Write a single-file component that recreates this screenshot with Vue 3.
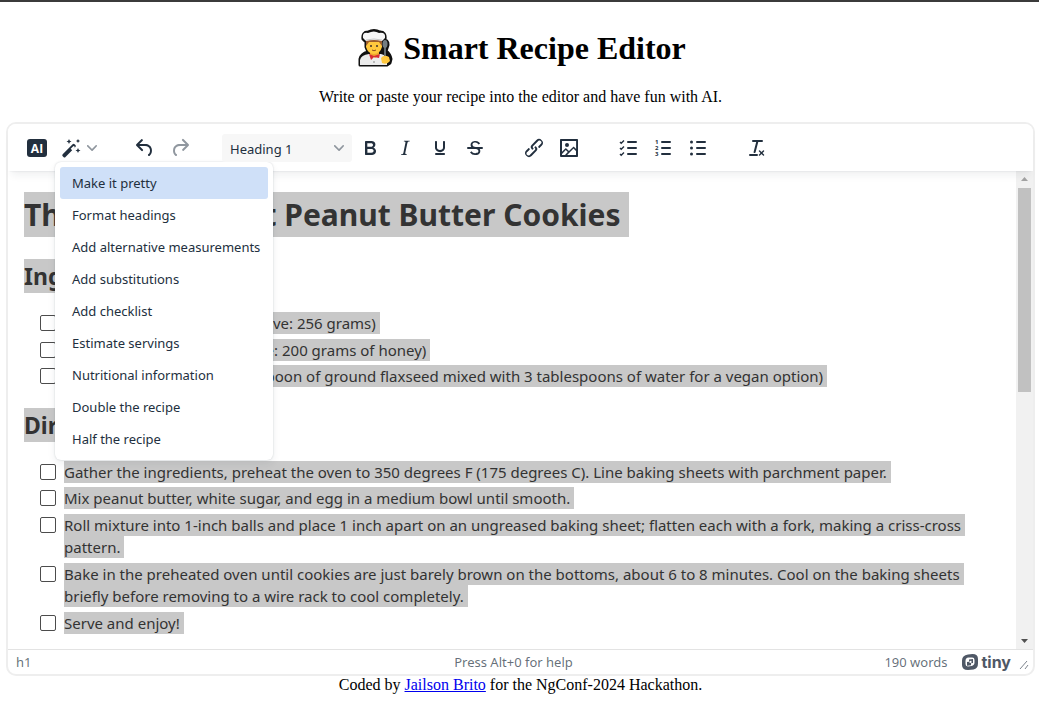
<script setup>
import { ref } from 'vue'

const actions = [
  'Make it pretty',
  'Format headings',
  'Add alternative measurements',
  'Add substitutions',
  'Add checklist',
  'Estimate servings',
  'Nutritional information',
  'Double the recipe',
  'Half the recipe'
]

const sections = [
  {
    title: 'Ingredients',
    items: [
      '1 cup peanut butter (Alternative: 256 grams)',
      '1 cup white sugar (Alternative: 200 grams of honey)',
      '1 egg (Alternative one tablespoon of ground flaxseed mixed with 3 tablespoons of water for a vegan option)'
    ]
  },
  {
    title: 'Directions',
    items: [
      'Gather the ingredients, preheat the oven to 350 degrees F (175 degrees C). Line baking sheets with parchment paper.',
      'Mix peanut butter, white sugar, and egg in a medium bowl until smooth.',
      'Roll mixture into 1-inch balls and place 1 inch apart on an ungreased baking sheet; flatten each with a fork, making a criss-cross pattern.',
      'Bake in the preheated oven until cookies are just barely brown on the bottoms, about 6 to 8 minutes. Cool on the baking sheets briefly before removing to a wire rack to cool completely.',
      'Serve and enjoy!'
    ]
  }
]

const formats = [
  { label: 'Bold', d: 'M7.8 19c-.3 0-.5 0-.6-.2l-.2-.5V5.7c0-.2 0-.4.2-.5l.6-.2h5c1.5 0 2.7.3 3.5 1 .7.6 1.1 1.4 1.1 2.5a3 3 0 0 1-.6 1.9c-.4.6-1 1-1.6 1.2.4.1.9.3 1.3.6s.8.7 1 1.2c.4.4.5 1 .5 1.6 0 1.3-.4 2.3-1.3 3-.8.7-2.1 1-3.8 1H7.8Zm5-8.3c.6 0 1.2-.1 1.6-.5.4-.3.6-.7.6-1.3 0-1.1-.8-1.7-2.3-1.7H9.3v3.5h3.4Zm.5 6c.7 0 1.3-.1 1.7-.4.4-.4.6-.9.6-1.5s-.2-1-.7-1.4c-.4-.3-1-.4-2-.4H9.4v3.8h4Z' },
  { label: 'Italic', d: 'm16.7 4.7-.1.9h-.3c-.6 0-1 0-1.4.3-.3.3-.4.6-.5 1.1l-2.1 9.8v.6c0 .5.4.8 1.4.8h.2l-.2.8H8l.2-.8h.2c1.1 0 1.8-.5 2-1.5l2-9.8.1-.5c0-.6-.4-.8-1.4-.8h-.3l.2-.9h5.8Z' },
  { label: 'Underline', d: 'M16 5c.6 0 1 .4 1 1v5.5a4 4 0 0 1-.4 1.8l-1 1.4a5.3 5.3 0 0 1-5.5 1 5 5 0 0 1-1.6-1c-.5-.4-.8-.9-1.1-1.4a4 4 0 0 1-.4-1.8V6c0-.6.4-1 1-1s1 .4 1 1v5.5c0 .3 0 .6.2 1l.6.7a3.3 3.3 0 0 0 2.2.8 3.4 3.4 0 0 0 2.2-.8c.3-.2.4-.5.6-.8l.2-.9V6c0-.6.4-1 1-1ZM8 17h8c.6 0 1 .4 1 1s-.4 1-1 1H8a1 1 0 0 1 0-2Z' },
  { label: 'Strikethrough', d: 'M15.6 8.5c-.5-.7-1-1.1-1.3-1.3-.6-.4-1.3-.6-2-.6-2.7 0-2.8 1.7-2.8 2.1 0 1.6 1.8 2 3.2 2.3 4.4.9 4.6 2.8 4.6 3.9 0 1.4-.7 4.1-5 4.1A6.2 6.2 0 0 1 7 16.4l1.5-1.1c.4.6 1.6 2 3.7 2 1.6 0 2.5-.4 3-1.2.4-.8.3-2-.8-2.6-.7-.4-1.6-.7-2.9-1-1-.2-3.9-.8-3.9-3.6C7.6 6 10.3 5 12.4 5c2.9 0 4.2 1.6 4.7 2.4l-1.5 1.1ZM5 11h14a1 1 0 0 1 0 2H5a1 1 0 0 1 0-2Z' }
]

const inserts = [
  { label: 'Link', d: 'M6.2 12.3a1 1 0 0 1 1.4 1.4l-2 2a2 2 0 1 0 2.6 2.8l4.8-4.8a1 1 0 0 0 0-1.4 1 1 0 1 1 1.4-1.3 2.9 2.9 0 0 1 0 4L9.6 20a3.9 3.9 0 0 1-5.5-5.5l2-2Zm11.6-.6a1 1 0 0 1-1.4-1.4l2-2a2 2 0 1 0-2.6-2.8L11 10.3a1 1 0 0 0 0 1.4A1 1 0 1 1 9.6 13a2.9 2.9 0 0 1 0-4L14.4 4a3.9 3.9 0 0 1 5.5 5.5l-2 2Z' },
  { label: 'Image', d: 'm5 15.7 3.3-3.2c.3-.3.7-.3 1 0L12 15l4.1-4c.3-.4.8-.4 1 0l2 1.9V5H5v10.7ZM5 18V19h3l2.8-2.9-2-2L5 17.9Zm14-3-2.5-2.4-6.4 6.5H19v-4ZM4 3h16c.6 0 1 .4 1 1v16c0 .6-.4 1-1 1H4a1 1 0 0 1-1-1V4c0-.6.4-1 1-1Zm6 8a2 2 0 1 0 0-4 2 2 0 0 0 0 4Z' }
]

const block = ref('Heading 1')
</script>

<template>
  <div class="page">
    <header class="intro">
      <h1 class="title">
        <svg class="chef" width="36" height="40" viewBox="0 0 36 40" aria-hidden="true">
          <path d="M3 37V31q1-5 8-7l-2-5V14L6 11Q5 4 11 4Q17 1 23 4Q29 4 28 11L26 13Q31 11 31 17L29 23Q33 26 34 31L33 35 30 37Z" fill="#111" stroke="#111" stroke-width="3" stroke-linejoin="round" />
          <path d="M3 37V32q1-5 9-6h12q5 1 6 5v6Z" fill="#ececec" />
          <path d="M13 22h9v5l-4 3-5-3Z" fill="#eea52d" />
          <path d="M9 13h16v6q-2 7-8 7t-8-7Z" fill="#ffc83d" />
          <path d="M9 12h16v6l-3-4H12l-3 4Z" fill="#9b5b2b" />
          <path d="M9 13 6 10Q5 4 11 5Q17 2 22 5Q29 4 28 10L25 13Q17 11 9 13Z" fill="#f7f7f7" />
          <path d="M9 12Q17 10 25 12" fill="none" stroke="#c9c9c9" />
          <circle cx="14" cy="18" r="1" fill="#40302a" /><circle cx="20" cy="18" r="1" fill="#40302a" />
          <path d="M15 22q2 1.500 4 0" fill="none" stroke="#8a4b20" />
          <path d="m12 26 5 2 6-2-1 4-5-1-3 3Z" fill="#d92c35" />
          <path d="M28 17v14" stroke="#626b70" stroke-width="2" />
          <ellipse cx="28" cy="16" rx="2.500" ry="4" fill="#737d82" />
          <path d="M24 30q3-4 8-1l1 4q-3 4-8 2Z" fill="#ffc83d" />
          <circle cx="17" cy="34" r="1" fill="#aaa" />
        </svg>
        Smart Recipe Editor
      </h1>
      <p class="lead">Write or paste your recipe into the editor and have fun with AI.</p>
    </header>

    <main class="editor">
      <div class="toolbar" role="toolbar" aria-label="Editor toolbar">
        <div class="group">
          <button class="tool" aria-label="AI assistant">
            <svg width="24" height="24" viewBox="0 0 24 24">
              <rect x="2" y="3" width="20" height="18" rx="3" />
              <text x="12" y="16.500" class="ai-mark">AI</text>
            </svg>
          </button>
          <div class="split">
            <button class="tool wand" aria-label="Recipe shortcuts">
              <svg width="24" height="24" viewBox="0 0 24 24">
                <path fill-rule="evenodd" d="M3.700 18.200 13.600 8.300q1-1 2 0l.8.8q1 1 0 2L6.500 21q-1 1-2 0l-.8-.8q-1-1 0-2Zm8-5.500 1.500 1.500 2.300-2.400q.7-.7 0-1.400-.8-.8-1.500 0Z" />
                <path d="m10 3 .8 1.700 1.700.8-1.700.8L10 8l-.8-1.700-1.700-.8 1.700-.8ZM19 3l.7 1.300L21 5l-1.300.7L19 7l-.7-1.300L17 5l1.300-.7ZM19 12l.8 1.700 1.700.8-1.700.8L19 17l-.8-1.700-1.700-.8 1.700-.8Z" />
              </svg>
            </button>
            <button class="more" aria-label="Open recipe shortcuts" aria-expanded="true">
              <svg class="chevron" width="10" height="10" viewBox="0 0 10 10"><path d="M8.700 2.200c.3-.3.8-.3 1 0 .4.400.4.900 0 1.200L5.700 7.800c-.3.300-.9.300-1.200 0L.2 3.400a.8.800 0 0 1 0-1.200c.3-.3.800-.3 1.100 0L5 6l3.700-3.800Z" /></svg>
            </button>
            <div class="menu" role="menu">
              <button v-for="(action, i) in actions" :key="action" class="menu-item" :class="{ active: i === 0 }" role="menuitem">{{ action }}</button>
            </div>
          </div>
        </div>
        <div class="group">
          <button class="tool" aria-label="Undo">
            <svg width="24" height="24" viewBox="0 0 24 24"><path d="M6.400 8H12c3.700 0 6.200 2 6.800 5.100.6 2.700-.4 5.600-2.300 6.800a1 1 0 0 1-1-1.800c1.100-.6 1.800-2.700 1.400-4.600-.5-2.100-2.100-3.500-4.900-3.500H6.400l3.300 3.300a1 1 0 1 1-1.400 1.400l-5-5a1 1 0 0 1 0-1.400l5-5a1 1 0 0 1 1.400 1.400L6.400 8Z" /></svg>
          </button>
          <button class="tool" aria-label="Redo" disabled>
            <svg width="24" height="24" viewBox="0 0 24 24"><path d="M17.600 10H12c-2.800 0-4.400 1.400-4.900 3.500-.4 2 .3 4 1.400 4.600a1 1 0 1 1-1 1.800c-2-1.200-2.900-4.100-2.300-6.800.6-3 3-5.100 6.800-5.100h5.600l-3.300-3.300a1 1 0 1 1 1.400-1.400l5 5a1 1 0 0 1 0 1.400l-5 5a1 1 0 0 1-1.400-1.400l3.300-3.300Z" /></svg>
          </button>
        </div>
        <div class="group">
          <div class="block-picker">
            <select v-model="block" class="block-select" aria-label="Block format">
              <option>Heading 1</option>
              <option>Heading 2</option>
              <option>Paragraph</option>
            </select>
            <svg class="chevron" width="10" height="10" viewBox="0 0 10 10"><path d="M8.700 2.200c.3-.3.800-.3 1 0 .4.400.4.900 0 1.200L5.700 7.800c-.3.300-.9.300-1.200 0L.2 3.400a.8.800 0 0 1 0-1.200c.3-.3.800-.3 1.100 0L5 6l3.700-3.800Z" /></svg>
          </div>
          <button v-for="tool in formats" :key="tool.label" class="tool" :aria-label="tool.label">
            <svg width="24" height="24" viewBox="0 0 24 24"><path :d="tool.d" /></svg>
          </button>
        </div>
        <div class="group">
          <button v-for="tool in inserts" :key="tool.label" class="tool" :aria-label="tool.label">
            <svg width="24" height="24" viewBox="0 0 24 24"><path fill-rule="evenodd" :d="tool.d" /></svg>
          </button>
        </div>
        <div class="group">
          <button class="tool" aria-label="Checklist">
            <svg width="24" height="24" viewBox="0 0 24 24">
              <path class="bars" d="M12 6h8M12 12h8M12 18h8" />
              <path class="ticks" d="m4 6 1.200 1.200L8 4.500M4 12l1.200 1.200L8 10.500M4 18l1.200 1.200L8 16.500" />
            </svg>
          </button>
          <button class="tool" aria-label="Numbered list">
            <svg width="24" height="24" viewBox="0 0 24 24">
              <path class="bars" d="M11 6h8M11 12h8M11 18h8" />
              <g class="digits"><text x="4" y="8">1</text><text x="4" y="14">2</text><text x="4" y="20">3</text></g>
            </svg>
          </button>
          <button class="tool" aria-label="Bullet list">
            <svg width="24" height="24" viewBox="0 0 24 24">
              <path class="bars" d="M11 6h8M11 12h8M11 18h8" />
              <circle cx="5.500" cy="6" r="1.500" /><circle cx="5.500" cy="12" r="1.500" /><circle cx="5.500" cy="18" r="1.500" />
            </svg>
          </button>
        </div>
        <div class="group">
          <button class="tool" aria-label="Clear formatting">
            <svg width="24" height="24" viewBox="0 0 24 24"><path d="M13.200 6a1 1 0 0 1 0 .2l-2.600 10a1 1 0 0 1-1 .8h-.2a.8.800 0 0 1-.8-1l2.600-10H8a1 1 0 1 1 0-2h9a1 1 0 0 1 0 2h-3.800ZM5 18h7a1 1 0 0 1 0 2H5a1 1 0 0 1 0-2Zm13 1.500L16.500 18 15 19.500a.7.700 0 0 1-1-1l1.500-1.500-1.500-1.500a.7.700 0 0 1 1-1l1.500 1.500 1.500-1.500a.7.700 0 0 1 1 1L17.500 17l1.500 1.500a.7.700 0 0 1-1 1Z" /></svg>
          </button>
        </div>
      </div>

      <div class="workspace">
        <article class="recipe">
          <h1><span class="picked">Three Ingredient Peanut Butter Cookies</span></h1>
          <section v-for="section in sections" :key="section.title">
            <h2><span class="picked">{{ section.title }}</span></h2>
            <ul>
              <li v-for="item in section.items" :key="item">
                <label>
                  <input type="checkbox">
                  <span class="step"><span class="picked">{{ item }}</span></span>
                </label>
              </li>
            </ul>
          </section>
        </article>
        <div class="scrollbar" aria-hidden="true">
          <svg width="17" height="17" viewBox="0 0 17 17"><path d="M5 10h7L8.500 6Z" fill="#a3a3a3" /></svg>
          <div class="track"><div class="thumb"></div></div>
          <svg width="17" height="17" viewBox="0 0 17 17"><path d="M5 7h7l-3.500 4Z" fill="#505050" /></svg>
        </div>
      </div>

      <footer class="status">
        <span>h1</span>
        <span>Press Alt+0 for help</span>
        <div class="summary">
          <span>190 words</span>
          <a class="brand" href="#" aria-label="Powered by Tiny">
            <svg width="16" height="16" viewBox="0 0 16 16" aria-hidden="true">
              <path fill-rule="evenodd" d="M6 .6 10.500 0Q16 0 16 5v4.500q0 5-4.500 5.900L6 16q-6 0-6-5V6.500Q0 1.500 6 .6Zm.5 3Q3.500 4 3.500 7v3q0 2.500 2.500 2.400l3.500-.5q3-.4 3-3.400V6q0-2.500-2.500-2.400Z" />
              <path fill-rule="evenodd" d="M7 5.500 11 5v4l-2 .3v1.900l-4 .5V8l2-.3ZM7.500 7v2L9.500 8.700v-2Z" />
            </svg>
            <span>tiny</span>
          </a>
        </div>
        <svg class="grip" width="10" height="10" viewBox="0 0 10 10" aria-hidden="true"><path d="M1 9 8 1M6 9l3-4" /></svg>
      </footer>
    </main>

    <footer class="credit">Coded by <a href="#">Jailson Brito</a> for the NgConf-2024 Hackathon.</footer>
  </div>
</template>

<style>
body {
  background: #fff;
}
</style>

<style scoped>
* {
  box-sizing: border-box;
}
.page {
  --ink: #222f3e;
  --ui: "Noto Sans", "Open Sans", sans-serif;
  padding-left: 2px;
  border-top: 2px solid #3b3b3b;
  color: #000;
  font: 16px/18px "Liberation Serif", "Times New Roman", serif;
}
.intro {
  text-align: center;
}
.title {
  display: flex;
  justify-content: center;
  align-items: center;
  gap: 10px;
  margin: 25px 0 0;
  padding-left: 2px;
  font-size: 32px;
  line-height: 42px;
}
.lead {
  margin: 19px 0 16px;
}
.editor {
  margin: 0 4px;
  border: 2px solid #eee;
  border-radius: 10px;
  color: var(--ink);
  font-family: var(--ui);
}
button,
select {
  border: 0;
  padding: 0;
  color: inherit;
  background: none;
  font-family: inherit;
}
.toolbar {
  position: relative;
  z-index: 1;
  display: flex;
  gap: 25px;
  height: 47px;
  padding: 10px 12px 9px;
  background: #fff;
  border-radius: 8px 8px 0 0;
  box-shadow: 0 2px 2px -2px rgba(34, 47, 62, 0.15), 0 8px 8px -4px rgba(34, 47, 62, 0.07);
}
.group {
  display: flex;
  gap: 1px;
}
.tool {
  display: flex;
  align-items: center;
  justify-content: center;
  width: 34px;
  height: 28px;
}
.tool svg {
  fill: var(--ink);
}
.tool:disabled svg {
  fill: #90979f;
}
.ai-mark {
  fill: #fff;
  font: 700 12px "Open Sans", sans-serif;
  text-anchor: middle;
}
.bars {
  stroke: var(--ink);
  stroke-width: 2;
  stroke-linecap: round;
}
.ticks {
  fill: none;
  stroke: var(--ink);
  stroke-width: 1.4;
}
.digits {
  font: 700 6px "Open Sans", sans-serif;
}
.split {
  position: relative;
  display: flex;
}
.wand {
  width: 32px;
}
.more {
  display: flex;
  align-items: center;
  width: 16px;
}
.chevron {
  fill: #8f969e;
}
.menu {
  position: absolute;
  top: 28px;
  left: 0;
  padding: 5px;
  background: #fff;
  border-radius: 6px;
  box-shadow: 0 0 2px rgba(34, 47, 62, 0.2), 0 4px 8px rgba(34, 47, 62, 0.07);
}
.menu-item {
  display: block;
  width: 208px;
  height: 32px;
  padding: 0 0 0 12px;
  border-radius: 3px;
  font-size: 13px;
  line-height: 32px;
  text-align: left;
  white-space: nowrap;
}
.menu-item.active {
  background: #cfe0f8;
}
.block-picker {
  position: relative;
  width: 130px;
}
.block-select {
  appearance: none;
  width: 100%;
  height: 28px;
  padding: 2px 8px 0;
  border-radius: 3px;
  background: #f7f7f7;
  font-size: 13px;
}
.block-picker .chevron {
  position: absolute;
  top: 9px;
  right: 8px;
  pointer-events: none;
}
.workspace {
  display: flex;
}
.recipe {
  flex: 1;
  padding: 21px 16px 15px;
  color: #333;
}
.picked {
  background: #c8c8c8;
}
.recipe h1,
.recipe h2 {
  display: flex;
  margin: 0;
}
.recipe h1 {
  margin-bottom: 22px;
  font-size: 30px;
  line-height: 45px;
}
.recipe h2 {
  margin-top: 20px;
  font-size: 23px;
  line-height: 34px;
}
.recipe h1 .picked {
  padding-right: 8px;
}
.recipe h2 .picked {
  padding-right: 6px;
}
.recipe ul {
  display: grid;
  gap: 4px;
  margin: 19px 0 0;
  padding: 0 0 0 16px;
  list-style: none;
  font-size: 15px;
  line-height: 1.5;
}
.recipe label {
  display: flex;
  gap: 8px;
}
.recipe input {
  appearance: none;
  flex: none;
  width: 16px;
  height: 16px;
  margin: 3px 0 0;
  border: 1px solid #4c4c4c;
  border-radius: 2px;
  background: #fff;
}
.step .picked {
  padding: 1px 4px 1px 0;
  box-decoration-break: clone;
  -webkit-box-decoration-break: clone;
}
.scrollbar {
  display: flex;
  flex-direction: column;
  flex: none;
  width: 17px;
  background: #f1f1f1;
}
.scrollbar svg {
  display: block;
  flex: none;
}
.track {
  flex: 1;
  padding: 0 2px;
}
.thumb {
  height: 46%;
  background: #c1c1c1;
}
.status {
  display: grid;
  grid-template-columns: 1fr auto 1fr auto;
  align-items: center;
  height: 25px;
  padding: 0 4px 0 8px;
  border-top: 1px solid #e3e3e3;
  color: rgba(34, 47, 62, 0.7);
  font-size: 13px;
}
.summary {
  display: flex;
  align-items: center;
  justify-content: flex-end;
  gap: 15px;
}
.brand {
  display: flex;
  align-items: center;
  gap: 3px;
  color: #4f5866;
  font: 700 16px/20px Inter, sans-serif;
  text-decoration: none;
}
.brand svg {
  fill: #4f5866;
}
.grip {
  align-self: end;
  margin: 0 0 4px 8px;
  fill: none;
  stroke: #7d848d;
}
.credit {
  text-align: center;
}
.credit a {
  color: #0000ee;
}
</style>
